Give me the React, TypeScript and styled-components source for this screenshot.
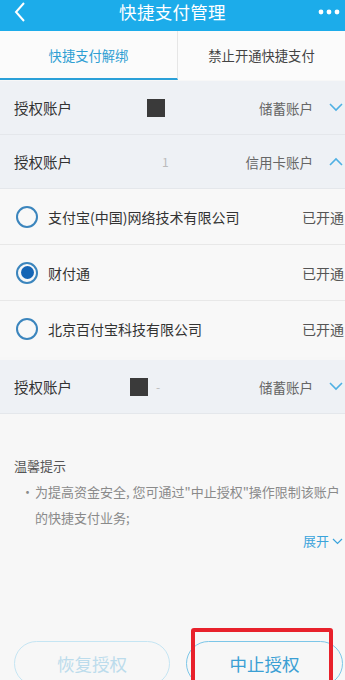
import React from "react";
import styled, { createGlobalStyle } from "styled-components";

const Global = createGlobalStyle`
  html, body { margin: 0; padding: 0; background: #f7f7f7; }
  body { font-family: "Noto Sans CJK SC", "Noto Sans", sans-serif; }
  * { box-sizing: border-box; }
`;

const Page = styled.div`
  width: 345px;
  height: 680px;
  overflow: hidden;
  display: flex;
  flex-direction: column;
  background: #f7f7f7;
  position: relative;
`;

const Header = styled.div`
  height: 31px;
  background: #1cacea;
  display: grid;
  grid-template-columns: 50px 1fr 50px;
  align-items: center;
  color: #fff;
`;

const Title = styled.div`
  text-align: center;
  font-size: 17.5px;
  line-height: 22px;
  margin-top: -7px;
  letter-spacing: 0.3px;
`;

const HeaderSide = styled.div<{ $right?: boolean }>`
  display: flex;
  justify-content: ${(p) => (p.$right ? "flex-end" : "flex-start")};
  padding: ${(p) => (p.$right ? "0 5px 0 0" : "0 0 0 13px")};
  margin-top: -7px;
`;

const Tabs = styled.div`
  height: 49px;
  display: grid;
  grid-template-columns: 178px 1fr;
  background: #fbfbfb;
`;

const Tab = styled.div<{ $active?: boolean }>`
  display: flex;
  align-items: center;
  justify-content: center;
  font-size: 13.3px;
  color: ${(p) => (p.$active ? "#2e9fd3" : "#444")};
  border-bottom: 2px solid ${(p) => (p.$active ? "#2aa0d8" : "transparent")};
  border-right: ${(p) => (p.$active ? "1px solid #e6e6e6" : "none")};
  padding-top: 2px;
`;

const AccountRow = styled.div<{ $top?: number }>`
  height: 54px;
  margin-top: ${(p) => p.$top ?? 0}px;
  background: #eef1f5;
  border-bottom: 1px solid #e4e7eb;
  display: flex;
  align-items: center;
  padding: 0 2px 0 14px;
`;

const AccountLabel = styled.div`
  font-size: 14.5px;
  color: #333;
  display: flex;
  align-items: center;
  flex: 1;
`;

const Mask = styled.span<{ $left: number; $size: number }>`
  display: inline-block;
  width: ${(p) => p.$size}px;
  height: ${(p) => p.$size}px;
  background: #3a3a3a;
  margin-left: ${(p) => p.$left}px;
`;

const Faint = styled.span<{ $left: number }>`
  color: #bbb;
  font-size: 12px;
  margin-left: ${(p) => p.$left}px;
`;

const AccountType = styled.div`
  font-size: 13.5px;
  color: #666;
  margin-right: 16px;
`;

const Options = styled.div`
  background: #f8f8f8;
  display: flex;
  flex-direction: column;
`;

const Option = styled.div<{ $last?: boolean }>`
  height: 56px;
  display: flex;
  align-items: center;
  padding-left: 16px;
  border-bottom: ${(p) => (p.$last ? "none" : "1px solid #e8e8e8")};
`;

const Radio = styled.span<{ $checked?: boolean }>`
  width: 22px;
  height: 22px;
  border-radius: 50%;
  border: 2px solid #3b85bd;
  display: flex;
  align-items: center;
  justify-content: center;
  margin-right: 10px;
  &::after {
    content: "";
    display: ${(p) => (p.$checked ? "block" : "none")};
    width: 13px;
    height: 13px;
    border-radius: 50%;
    background: #1565b5;
  }
`;

const OptionName = styled.div`
  flex: 1;
  font-size: 14px;
  color: #333;
`;

const OptionStatus = styled.div`
  font-size: 14px;
  color: #555;
  width: 43px;
  white-space: nowrap;
`;

const Tips = styled.div`
  padding: 39px 0 0 14px;
  display: flex;
  flex-direction: column;
`;

const TipsTitle = styled.div`
  font-size: 13px;
  color: #555;
  line-height: 26px;
`;

const TipItem = styled.div`
  display: grid;
  grid-template-columns: 21px 1fr;
  font-size: 13px;
  line-height: 26px;
  color: #8a8a8a;
  padding-right: 2px;
`;

const Bullet = styled.span`
  text-align: center;
  padding-left: 6px;
`;

const Expand = styled.div`
  align-self: flex-end;
  display: flex;
  align-items: center;
  gap: 3px;
  font-size: 13px;
  color: #3aa3db;
  padding-right: 2px;
  line-height: 20px;
`;

const Buttons = styled.div`
  margin-top: auto;
  display: grid;
  grid-template-columns: 156px 157px;
  gap: 16px;
  padding: 0 0 0 14px;
  margin-bottom: -6px;
`;

const Button = styled.div<{ $primary?: boolean }>`
  height: 45px;
  border-radius: 23px;
  border: 1px solid ${(p) => (p.$primary ? "#7cc6e8" : "#c5e5f3")};
  display: flex;
  align-items: center;
  justify-content: center;
  font-size: 17.5px;
  color: ${(p) => (p.$primary ? "#3a9fd4" : "#bcdcec")};
  position: relative;
`;

const Highlight = styled.div`
  position: absolute;
  left: 4px;
  right: 9px;
  top: -14px;
  bottom: -10px;
  border: 4px solid #e8212b;
  border-radius: 3px;
`;

const Chevron = ({ up, color = "#4fb0e3" }: { up?: boolean; color?: string }) => (
  <svg width="14" height="9" viewBox="0 0 14 9">
    <polyline
      points={up ? "1,8 7,2 13,8" : "1,1 7,7 13,1"}
      fill="none"
      stroke={color}
      strokeWidth="1.6"
    />
  </svg>
);

const SmallChevron = () => (
  <svg width="11" height="7" viewBox="0 0 11 7">
    <polyline points="1,1 5.5,5.5 10,1" fill="none" stroke="#3aa3db" strokeWidth="1.2" />
  </svg>
);

export default function App() {
  return (
    <Page>
      <Global />
      <Header>
        <HeaderSide>
          <svg width="14" height="22" viewBox="0 0 14 22">
            <polyline points="11,2 3,11 11,20" fill="none" stroke="#fff" strokeWidth="2" />
          </svg>
        </HeaderSide>
        <Title>快捷支付管理</Title>
        <HeaderSide $right>
          <svg width="22" height="6" viewBox="0 0 22 6">
            <circle cx="3" cy="3" r="2.4" fill="#fff" />
            <circle cx="11" cy="3" r="2.4" fill="#fff" />
            <circle cx="19" cy="3" r="2.4" fill="#fff" />
          </svg>
        </HeaderSide>
      </Header>
      <Tabs>
        <Tab $active>快捷支付解绑</Tab>
        <Tab>禁止开通快捷支付</Tab>
      </Tabs>
      <AccountRow $top={1}>
        <AccountLabel>
          授权账户
          <Mask $left={75} $size={18} />
        </AccountLabel>
        <AccountType>储蓄账户</AccountType>
        <Chevron />
      </AccountRow>
      <AccountRow>
        <AccountLabel>
          授权账户
          <Faint $left={90}>1</Faint>
        </AccountLabel>
        <AccountType>信用卡账户</AccountType>
        <Chevron up />
      </AccountRow>
      <Options>
        <Option>
          <Radio />
          <OptionName>支付宝(中国)网络技术有限公司</OptionName>
          <OptionStatus>已开通</OptionStatus>
        </Option>
        <Option>
          <Radio $checked />
          <OptionName>财付通</OptionName>
          <OptionStatus>已开通</OptionStatus>
        </Option>
        <Option $last>
          <Radio />
          <OptionName>北京百付宝科技有限公司</OptionName>
          <OptionStatus>已开通</OptionStatus>
        </Option>
      </Options>
      <AccountRow $top={3}>
        <AccountLabel>
          授权账户
          <Mask $left={58} $size={18} />
          <Faint $left={8}>-</Faint>
        </AccountLabel>
        <AccountType>储蓄账户</AccountType>
        <Chevron />
      </AccountRow>
      <Tips>
        <TipsTitle>温馨提示</TipsTitle>
        <TipItem>
          <Bullet>•</Bullet>
          <span>为提高资金安全, 您可通过"中止授权"操作限制该账户的快捷支付业务;</span>
        </TipItem>
        <Expand>
          展开
          <SmallChevron />
        </Expand>
      </Tips>
      <Buttons>
        <Button>恢复授权</Button>
        <Button $primary>
          中止授权
          <Highlight />
        </Button>
      </Buttons>
    </Page>
  );
}
